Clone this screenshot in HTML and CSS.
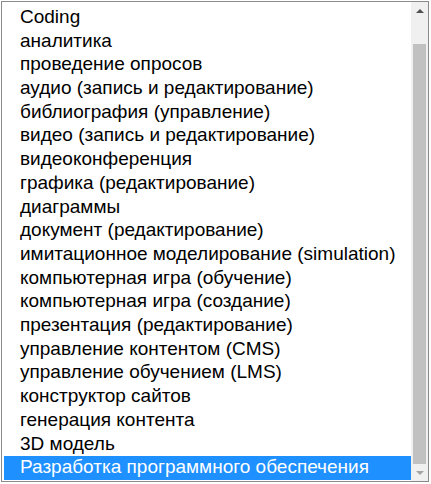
FILE: index.html
```html
<!DOCTYPE html>
<html>
<head>
<meta charset="utf-8">
<link rel="stylesheet" href="styles.css">
</head>
<body>
<div class="listbox">
  <div class="list">
    <div class="opt">Coding</div>
    <div class="opt">аналитика</div>
    <div class="opt">проведение опросов</div>
    <div class="opt">аудио (запись и редактирование)</div>
    <div class="opt">библиография (управление)</div>
    <div class="opt">видео (запись и редактирование)</div>
    <div class="opt">видеоконференция</div>
    <div class="opt">графика (редактирование)</div>
    <div class="opt">диаграммы</div>
    <div class="opt">документ (редактирование)</div>
    <div class="opt">имитационное моделирование (simulation)</div>
    <div class="opt">компьютерная игра (обучение)</div>
    <div class="opt">компьютерная игра (создание)</div>
    <div class="opt">презентация (редактирование)</div>
    <div class="opt">управление контентом (CMS)</div>
    <div class="opt">управление обучением (LMS)</div>
    <div class="opt">конструктор сайтов</div>
    <div class="opt">генерация контента</div>
    <div class="opt">3D модель</div>
    <div class="opt selected">Разработка программного обеспечения</div>
  </div>
  <div class="scrollbar">
    <div class="sb-btn"><span class="arrow-up"></span></div>
    <div class="sb-track"><div class="sb-thumb"></div></div>
    <div class="sb-btn"><span class="arrow-down"></span></div>
  </div>
</div>
</body>
</html>
```
FILE: styles.css
```css
html, body {
  margin: 0;
  padding: 0;
  background: #ffffff;
}
body {
  width: 431px;
  height: 484px;
  overflow: hidden;
  font-family: "Liberation Sans", Arial, sans-serif;
}
.listbox {
  margin: 1px 0 0 1px;
  width: 428px;
  height: 481px;
  box-sizing: border-box;
  border: 1px solid #8a8a8a;
  display: flex;
  background: #fff;
}
.list {
  flex: 1;
  display: flex;
  flex-direction: column;
  justify-content: flex-end;
  overflow: hidden;
  padding: 0 0 1px 2px;
}
.opt {
  flex: none;
  font-size: 19px;
  line-height: 22.7px;
  padding: 0 0 1px 16px;
  color: #000;
  white-space: nowrap;
}
.opt.selected {
  background: #1e90ff;
  color: #fff;
}
.scrollbar {
  width: 17px;
  flex: none;
  display: flex;
  flex-direction: column;
  background: #f0f0f0;
}
.sb-btn {
  height: 17px;
  flex: none;
  display: flex;
  align-items: center;
  justify-content: center;
}
.arrow-up {
  width: 0;
  height: 0;
  border-left: 4px solid transparent;
  border-right: 4px solid transparent;
  border-bottom: 4px solid #505050;
}
.arrow-down {
  width: 0;
  height: 0;
  border-left: 4px solid transparent;
  border-right: 4px solid transparent;
  border-top: 4px solid #a3a3a3;
}
.sb-track {
  flex: 1;
  display: flex;
  flex-direction: column;
  justify-content: flex-end;
  padding: 0 2px;
}
.sb-thumb {
  height: 420px;
  background: #c1c1c1;
}
```
